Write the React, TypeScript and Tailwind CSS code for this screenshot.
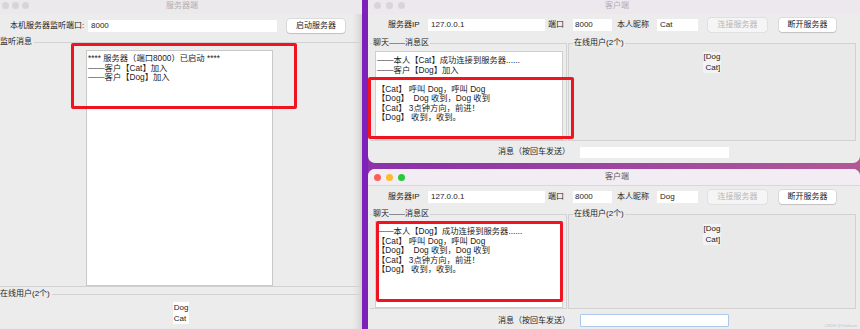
import React from "react";

const font = "font-['Liberation_Sans','Noto_Sans_CJK_SC',sans-serif]";

type LightsProps = { active?: boolean; gap: string };

const Lights = ({ active, gap }: LightsProps) => (
  <div className={`flex ${gap}`}>
    <span className={`h-[7px] w-[7px] rounded-full ${active ? "bg-[#fe5f57]" : "bg-[#d8d5d9]"}`} />
    <span className={`h-[7px] w-[7px] rounded-full ${active ? "bg-[#febb2e]" : "bg-[#d8d5d9]"}`} />
    <span className={`h-[7px] w-[7px] rounded-full ${active ? "bg-[#29c840]" : "bg-[#d8d5d9]"}`} />
  </div>
);

const RedBox = ({ className }: { className: string }) => (
  <div className={`pointer-events-none absolute rounded-[2px] border-[3px] border-[#f01420] ${className}`} />
);

const ServerWindow = () => (
  <div className="relative flex h-[329px] w-[362px] shrink-0 flex-col bg-[#ececec] shadow-[inset_-8px_0_8px_-6px_rgba(0,0,0,0.16)]">
    {/* title */}
    <div className="grid h-[14px] grid-cols-[1fr_auto_1fr] items-start bg-[#ebe9eb] pl-[2px] pt-[2px]">
      <Lights gap="gap-[3px]" />
      <span className="leading-[7px] text-[#b2aeb2]">服务器端</span>
      <span />
    </div>

    <div className="flex h-[23px] items-center pl-[10px]">
      <span className="w-[78px]">本机服务器监听端口:</span>
      <div className="h-[12px] w-[189px] bg-white pl-[3px] leading-[12px]">8000</div>
      <button className="ml-[10px] h-[14px] w-[58px] rounded-[3px] bg-white leading-[14px] shadow-[0_0_0_0.5px_rgba(0,0,0,0.14),0_1px_1px_rgba(0,0,0,0.12)]">
        启动服务器
      </button>
    </div>

    {/* 监听消息 */}
    <div className="mr-[1px] mt-[5px] flex h-[245px] flex-col border-b border-r border-t border-[#d2d2d2]">
      <span className="-mt-[6px] self-start bg-[#ececec] pr-[2px] leading-[10px]">监听消息</span>
      <div className="ml-[86px] mt-[3px] w-[187px] flex-1 border border-[#c8c8c8] bg-white pl-[1px] pt-[3px] text-[8.3px] leading-[9.5px]">
        <div className="whitespace-pre">**** 服务器（端口8000）已启动 ****</div>
        <div>——客户【Cat】加入</div>
        <div>——客户【Dog】加入</div>
      </div>
    </div>

    {/* 在线用户 */}
    <div className="mt-[7px] flex flex-col border-t border-[#d2d2d2]">
      <span className="-mt-[6px] self-start bg-[#ececec] pr-[2px] leading-[10px]">在线用户(2个)</span>
      <div className="mt-[3px] self-center bg-white px-[1px] leading-[11px]">
        <div>Dog</div>
        <div>Cat</div>
      </div>
    </div>

    <RedBox className="left-[71px] top-[43px] h-[66px] w-[226px]" />
  </div>
);

type ClientProps = {
  nick: string;
  active?: boolean;
  lines: string[];
  top?: boolean;
};

const ClientWindow = ({ nick, active, lines, top }: ClientProps) => (
  <div
    className={`relative flex flex-col overflow-hidden bg-[#ececec] ${
      top ? "h-[163px] rounded-b-[7px]" : "h-[160px] rounded-t-[7px]"
    }`}
  >
    {/* title */}
    <div
      className={`grid grid-cols-[1fr_auto_1fr] pl-[6px] ${
        top
          ? "h-[14px] items-start bg-[#ece8ee] pt-[2px]"
          : "h-[17px] items-center border-b border-[#dcd7dd] bg-[#f1edf3]"
      }`}
    >
      <Lights active={active} gap="gap-[5px]" />
      <span className={`leading-[8px] ${active ? "text-[#5c5a5c]" : "text-[#b2aeb2]"}`}>客户端</span>
      <span />
    </div>

    {/* connection row */}
    <div className="flex h-[22px] items-center pl-[20px]">
      <span className="w-[40px]">服务器IP</span>
      <div className="h-[12px] w-[117px] bg-white pl-[3px] leading-[12px]">127.0.0.1</div>
      <span className="ml-[3px] w-[25px]">端口</span>
      <div className="h-[12px] w-[39px] bg-white pl-[2px] leading-[12px]">8000</div>
      <span className="ml-[5px] w-[40px]">本人昵称</span>
      <div className="h-[12px] w-[41px] bg-white pl-[3px] leading-[12px]">{nick}</div>
      <button className="ml-[10px] h-[14px] w-[59px] rounded-[3px] bg-[#f5f5f5] leading-[14px] text-[#b7b7b7] shadow-[0_0_0_0.5px_rgba(0,0,0,0.1)]">
        连接服务器
      </button>
      <button className="ml-[12px] h-[14px] w-[57px] rounded-[3px] bg-white leading-[14px] shadow-[0_0_0_0.5px_rgba(0,0,0,0.14),0_1px_1px_rgba(0,0,0,0.12)]">
        断开服务器
      </button>
    </div>

    {/* groups */}
    <div className={`flex ${top ? "mt-[7px]" : "mt-[6px]"}`}>
      <div className="ml-[2px] flex w-[197px] flex-col border-b border-r border-t border-[#d2d2d2]">
        <span className="-mt-[6px] ml-[2px] self-start bg-[#ececec] px-[1px] leading-[10px]">聊天——消息区</span>
        <div
          className={`ml-[5px] w-[188px] border border-[#cfcfcf] bg-white pl-[1px] text-[8.3px] leading-[9.5px] ${
            top ? "mt-[3px] h-[89px] pt-[4px]" : "mt-[2px] h-[87px] pt-[5px]"
          }`}
        >
          {lines.map((l, i) => (
            <div key={i} className="h-[9.5px] whitespace-pre">
              {l}
            </div>
          ))}
        </div>
      </div>
      <div className="ml-[1px] flex w-[288px] flex-col border border-[#d2d2d2] bg-[#e9e9e9]">
        <span className="-mt-[6px] ml-[4px] self-start bg-[#ececec] px-[1px] leading-[10px]">在线用户(2个)</span>
        <div className={`self-center bg-[#f3f3f3] pl-[1px] pr-[1px] leading-[10.5px] ${top ? "mt-[4px]" : "mt-[5px]"}`}>
          <div>[Dog</div>
          <div className="pl-[2px]">Cat]</div>
        </div>
      </div>
    </div>

    {/* message row */}
    <div className={`flex pl-[130px] ${top ? "h-[22px] items-center" : "h-[20px] items-center pt-[3px]"}`}>
      <span className="w-[82px]">消息（按回车发送）</span>
      <div
        className={`w-[149px] bg-white ${
          top ? "h-[11px]" : "h-[13px] rounded-[1px] border border-[#abc9ee]"
        }`}
      />
    </div>

    {!top && (
      <span className="absolute bottom-[1px] right-[3px] text-[4px] leading-[5px] text-[#c4c4c4]">CSDN @Yukikaze</span>
    )}

    {top ? (
      <RedBox className="left-0 top-[77px] h-[62px] w-[206px]" />
    ) : (
      <RedBox className="left-[8px] top-[52px] h-[81px] w-[187px]" />
    )}
  </div>
);

export default function App() {
  return (
    <div
      className={`${font} flex h-[329px] w-[860px] overflow-hidden bg-gradient-to-r from-[#7a1fb5] via-[#8f34a8] to-[#b25896] text-[8px] text-[#1c1c1c]`}
    >
      <ServerWindow />
      <div className="w-[6px] shrink-0 bg-[#7e21b8]" />
      <div className="flex w-[492px] flex-col justify-between">
        <ClientWindow
          top
          nick="Cat"
          lines={[
            "——本人【Cat】成功连接到服务器......",
            "——客户【Dog】加入",
            "",
            "【Cat】 呼叫 Dog，呼叫 Dog",
            "【Dog】  Dog 收到，Dog 收到",
            "【Cat】 3点钟方向，前进！",
            "【Dog】 收到，收到。",
          ]}
        />
        <ClientWindow
          active
          nick="Dog"
          lines={[
            "——本人【Dog】成功连接到服务器......",
            "【Cat】 呼叫 Dog，呼叫 Dog",
            "【Dog】  Dog 收到，Dog 收到",
            "【Cat】 3点钟方向，前进！",
            "【Dog】 收到，收到。",
          ]}
        />
      </div>
    </div>
  );
}
